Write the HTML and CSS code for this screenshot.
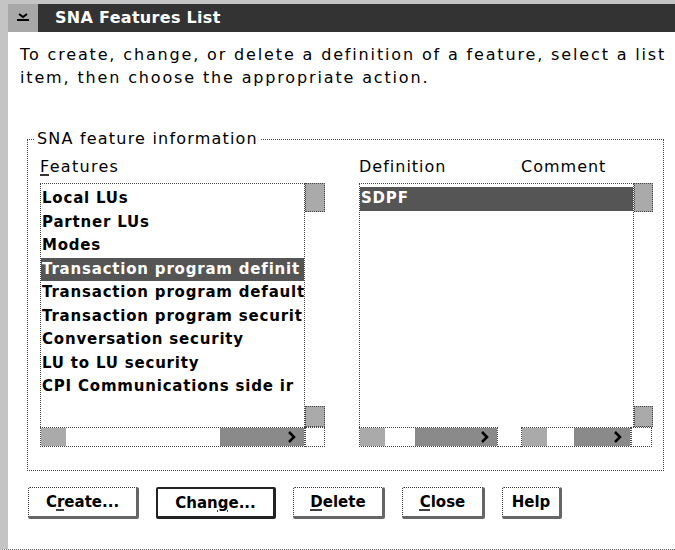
FILE: index.html
```html
<!DOCTYPE html>
<html lang="en">
<head>
    <meta charset="UTF-8">
    <title>SNA Features List</title>
    <link rel="stylesheet" href="styles.css">
</head>
<body>
    <div class="dialog">
        <div class="titlebar">
            <div class="sysmenu">
                <svg width="14" height="10" viewBox="0 0 14 10"><path d="M3 1l4 3 4-3M1 7h12" stroke="#000" stroke-width="2" fill="none"/></svg>
            </div>
            <div class="title">SNA Features List</div>
        </div>

        <div class="content">
            <p class="intro">To create, change, or delete a definition of a feature, select a list<br>item, then choose the appropriate action.</p>

            <fieldset class="group">
                <legend>SNA feature information</legend>
                <div class="columns">
                    <div class="col col-features">
                        <div class="col-head"><span class="mn">F</span>eatures</div>
                        <div class="listbox">
                            <div class="lb-main">
                                <ul class="items">
                                    <li>Local LUs</li>
                                    <li>Partner LUs</li>
                                    <li>Modes</li>
                                    <li class="selected">Transaction program definit</li>
                                    <li>Transaction program default</li>
                                    <li>Transaction program securit</li>
                                    <li>Conversation security</li>
                                    <li>LU to LU security</li>
                                    <li>CPI Communications side ir</li>
                                </ul>
                                <div class="vscroll">
                                    <div class="vbox vbox-top"></div>
                                    <div class="vbox vbox-bottom"></div>
                                </div>
                            </div>
                            <div class="lb-foot">
                                <div class="hscroll hs-features">
                                    <div class="hs-left"></div>
                                    <div class="hs-thumb"></div>
                                    <div class="hs-track"><svg width="8" height="12" viewBox="0 0 8 12"><path d="M1 1l5 5-5 5" stroke="#000" stroke-width="2.5" fill="none"/></svg></div>
                                </div>
                                <div class="corner"></div>
                            </div>
                        </div>
                    </div>

                    <div class="col col-def">
                        <div class="col-head heads">
                            <span class="h-def">Definition</span>
                            <span class="h-com">Comment</span>
                        </div>
                        <div class="listbox">
                            <div class="lb-main">
                                <ul class="items items-def">
                                    <li class="selected">SDPF</li>
                                </ul>
                                <div class="vscroll">
                                    <div class="vbox vbox-top"></div>
                                    <div class="vbox vbox-bottom"></div>
                                </div>
                            </div>
                            <div class="lb-foot">
                                <div class="hscroll hs-def">
                                    <div class="hs-left"></div>
                                    <div class="hs-thumb"></div>
                                    <div class="hs-track"><svg width="8" height="12" viewBox="0 0 8 12"><path d="M1 1l5 5-5 5" stroke="#000" stroke-width="2.5" fill="none"/></svg></div>
                                </div>
                                <div class="hs-gap"></div>
                                <div class="hscroll hs-com">
                                    <div class="hs-left"></div>
                                    <div class="hs-thumb"></div>
                                    <div class="hs-track"><svg width="8" height="12" viewBox="0 0 8 12"><path d="M1 1l5 5-5 5" stroke="#000" stroke-width="2.5" fill="none"/></svg></div>
                                </div>
                                <div class="corner"></div>
                            </div>
                        </div>
                    </div>
                </div>
            </fieldset>

            <div class="buttons">
                <button class="btn btn-create">C<span class="mn">r</span>eate...</button>
                <button class="btn btn-change btn-default">Chan<span class="mn">g</span>e...</button>
                <button class="btn btn-delete"><span class="mn">D</span>elete</button>
                <button class="btn btn-close"><span class="mn">C</span>lose</button>
                <button class="btn btn-help">Help</button>
            </div>
        </div>
    </div>
</body>
</html>
```

FILE: styles.css
```css
body {
    margin: 0;
    background: #fff;
    font-family: "DejaVu Sans", sans-serif;
    color: #000;
}
.dialog {
    width: 675px;
    height: 550px;
    box-sizing: border-box;
    border-top: 4px solid #c4c4c4;
    border-left: 8px solid #c4c4c4;
    border-bottom: 1px dotted #555;
    background: #fff;
}
.titlebar {
    display: flex;
    height: 28px;
}
.sysmenu {
    width: 30px;
    background: #a8a8a8;
    display: flex;
    align-items: center;
    justify-content: center;
}
.title {
    flex: 1;
    background: #333;
    color: #fff;
    font-weight: bold;
    font-size: 16px;
    line-height: 28px;
    padding-left: 17px;
    letter-spacing: 0.3px;
}
.content {
    padding: 11px 0 0 12px;
}
.intro {
    margin: 0;
    font-size: 16px;
    line-height: 23px;
    letter-spacing: 1.85px;
    white-space: nowrap;
}
.group {
    margin: 40px 0 0 7px;
    width: 637px;
    box-sizing: border-box;
    border: 1px dotted #444;
    padding: 0 0 23px 12px;
    min-width: 0;
}
.group legend {
    margin-left: -6px;
    padding: 0 3px;
    font-size: 16px;
    line-height: 20px;
    letter-spacing: 1.2px;
}
.columns {
    display: flex;
    gap: 34px;
    padding-top: 8px;
}
.col-head {
    font-size: 16px;
    line-height: 20px;
    letter-spacing: 1.3px;
    margin-bottom: 6px;
}
.heads {
    display: flex;
    letter-spacing: 1px;
}
.h-def {
    width: 162px;
}
.mn {
    text-decoration: underline dashed;
    text-underline-offset: 3px;
}
.listbox {
    display: flex;
    flex-direction: column;
}
.lb-main {
    display: flex;
    height: 244px;
}
.items {
    list-style: none;
    margin: 0;
    padding: 3px 0 0 0;
    width: 263px;
    border: 1px dotted #444;
    border-bottom: none;
    overflow: hidden;
    white-space: nowrap;
    font-weight: bold;
    font-size: 15px;
    line-height: 23.5px;
    letter-spacing: 0.8px;
}
.items li {
    padding-left: 1px;
}
.items .selected {
    background: #555;
    color: #fff;
}
.items-def {
    width: 273px;
}
.vscroll {
    width: 20px;
    display: flex;
    flex-direction: column;
    justify-content: space-between;
}
.vbox {
    background: #aaa;
    border: 1px dotted #444;
    box-sizing: border-box;
}
.vbox-top {
    height: 29px;
}
.vbox-bottom {
    height: 21px;
}
.col-def .vscroll {
    width: 19px;
}
.lb-foot {
    display: flex;
    height: 20px;
}
.hscroll {
    display: flex;
    box-sizing: border-box;
    border: 1px dotted #444;
}
.hs-features {
    width: 265px;
}
.hs-left {
    width: 25px;
    background: #aaa;
}
.hs-thumb {
    background: #fff;
}
.hs-features .hs-thumb {
    width: 154px;
}
.hs-track {
    flex: 1;
    background: #8a8a8a;
    display: flex;
    align-items: center;
    justify-content: flex-end;
    padding-right: 8px;
}
.hs-def {
    width: 139px;
}
.hs-def .hs-thumb {
    width: 30px;
}
.hs-gap {
    width: 23px;
    border-bottom: 1px dotted #444;
    box-sizing: border-box;
}
.hs-com {
    width: 110px;
}
.hs-com .hs-thumb {
    width: 27px;
}
.corner {
    width: 20px;
    box-sizing: border-box;
    border: 1px dotted #444;
}
.col-def .corner {
    width: 21px;
}
.buttons {
    display: flex;
    gap: 17px;
    margin: 16px 0 0 8px;
}
.btn {
    height: 32px;
    box-sizing: border-box;
    background: #fff;
    border: 1px dotted #333;
    border-right: 3px solid #666;
    border-bottom: 3px solid #666;
    border-radius: 2px;
    font-family: "DejaVu Sans", sans-serif;
    font-weight: bold;
    font-size: 15px;
    padding: 0;
    color: #000;
}
.btn-default {
    border: 2px solid #222;
    border-right: 3px solid #222;
    border-bottom: 3px solid #222;
}
.btn-create { width: 111px; }
.btn-change { width: 120px; }
.btn-delete { width: 92px; }
.btn-close { width: 83px; }
.btn-help { width: 60px; }
```
